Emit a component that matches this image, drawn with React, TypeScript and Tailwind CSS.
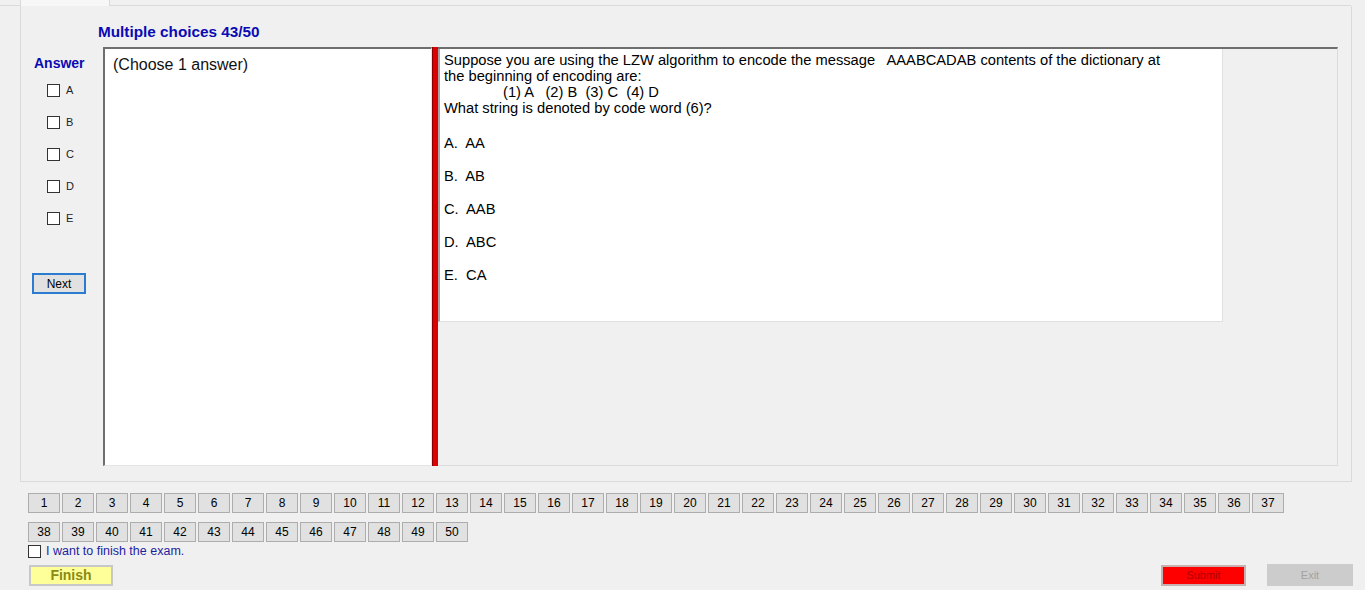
import React from "react";

const nums1 = Array.from({ length: 37 }, (_, i) => i + 1);
const nums2 = Array.from({ length: 13 }, (_, i) => i + 38);

function NumBtn({ n }: { n: number }) {
  return (
    <div className="w-[32px] h-[20px] bg-[#e1e1e1] border border-[#adadad] flex items-center justify-center text-[12px] leading-none text-black">
      {n}
    </div>
  );
}

function Box() {
  return <div className="w-[13px] h-[13px] bg-white border border-[#333333]" />;
}

export default function App() {
  const letters = ["A", "B", "C", "D", "E"];
  const options = [
    ["A.", "AA"],
    ["B.", "AB"],
    ["C.", "AAB"],
    ["D.", "ABC"],
    ["E.", "CA"],
  ];
  return (
    <div className="w-[1372px] h-[594px] bg-white font-['Liberation_Sans',Arial,sans-serif] text-black overflow-hidden">
      <div className="w-[1365px] h-[590px] bg-[#f0f0f0] flex flex-col">
        {/* tab strip */}
        <div className="h-[6px] flex">
          <div className="w-[20px] border-b border-[#dadada]" />
          <div className="w-[90px] bg-[#f7f7f7] border-x border-[#dadada]" />
          <div className="flex-1 border-b border-[#dadada] mr-[14px]" />
        </div>
        {/* tab page */}
        <div className="ml-[20px] w-[1332px] h-[476px] border border-t-0 border-[#dadada] flex flex-col">
          <div className="pt-[17px] pl-[77px] h-[41px] text-[15.3px] leading-[18px] font-bold text-[#0a0ab4]">
            Multiple choices 43/50
          </div>
          <div className="flex h-[419px]">
            {/* answer column */}
            <div className="w-[82px] flex flex-col pt-[8px]">
              <div className="pl-[13px] text-[14px] leading-[16px] font-bold text-[#0a0ab4]">Answer</div>
              <div className="mt-[3px] flex flex-col">
                {letters.map((l) => (
                  <div key={l} className="h-[32px] flex items-center pl-[26px] gap-[6px]">
                    <Box />
                    <span className="text-[11px] leading-none text-[#222]">{l}</span>
                  </div>
                ))}
              </div>
              <div className="mt-[39px] ml-[11px] w-[54px] h-[21px] border-2 border-[#2b7bd0] bg-[#e1e1e1] flex items-center justify-center text-[12px] leading-none">
                Next
              </div>
            </div>
            {/* left answer box */}
            <div className="w-[329px] bg-white border-t-2 border-l-2 border-[#6e6e6e] border-r border-b border-r-[#e5e5e5] border-b-[#e5e5e5] pl-[8px] pt-[6px] text-[16px] leading-[19px] text-[#111]">
              (Choose 1 answer)
            </div>
            {/* red bar */}
            <div className="w-[6px] bg-[#dc0000] border-l border-[#8a0000]" />
            {/* right panel */}
            <div className="w-[900px] border-t-2 border-[#6e6e6e] border-r border-b border-r-[#dcdcdc] border-b-[#dcdcdc]">
              <div className="w-[785px] h-[273px] bg-white border-l-2 border-[#a5a5a5] border-r border-b border-r-[#e0e0e0] border-b-[#e0e0e0] pl-[4px] pt-[3px] text-[14.7px] leading-[16px] text-black">
                <div className="whitespace-pre">Suppose you are using the LZW algorithm to encode the message   AAABCADAB contents of the dictionary at</div>
                <div>the beginning of encoding are:</div>
                <div className="pl-[59px] whitespace-pre">(1) A   (2) B  (3) C  (4) D</div>
                <div>What string is denoted by code word (6)?</div>
                <div className="mt-[19px] flex flex-col">
                  {options.map(([a, b]) => (
                    <div key={a} className="h-[33px] whitespace-pre">
                      {a}  {b}
                    </div>
                  ))}
                </div>
              </div>
            </div>
          </div>
        </div>
        {/* number buttons */}
        <div className="mt-[11px] ml-[28px] flex flex-col gap-[9px]">
          <div className="flex gap-[2px]">
            {nums1.map((n) => (
              <NumBtn key={n} n={n} />
            ))}
          </div>
          <div className="flex gap-[2px]">
            {nums2.map((n) => (
              <NumBtn key={n} n={n} />
            ))}
          </div>
        </div>
        <div className="mt-[2px] ml-[28px] flex items-center gap-[5px] h-[14px]">
          <Box />
          <span className="text-[12.5px] leading-none text-[#1e1ea0]">I want to finish the exam.</span>
        </div>
        <div className="mt-[6px] flex items-center h-[22px]">
          <div className="ml-[29px] w-[84px] h-[21px] bg-[#ffff99] border-2 border-[#c8c8c8] flex items-center justify-center text-[14px] leading-none font-bold text-[#8a8a14]">
            Finish
          </div>
          <div className="flex-1" />
          <div className="w-[85px] h-[21px] bg-[#ff0000] border-2 border-[#c9b0b0] flex items-center justify-center text-[11px] leading-none text-[#b00000]">
            Submit
          </div>
          <div className="ml-[21px] mr-[12px] w-[86px] h-[22px] bg-[#cccccc] flex items-center justify-center text-[11px] leading-none text-[#a2a2a2]">
            Exit
          </div>
        </div>
      </div>
    </div>
  );
}
